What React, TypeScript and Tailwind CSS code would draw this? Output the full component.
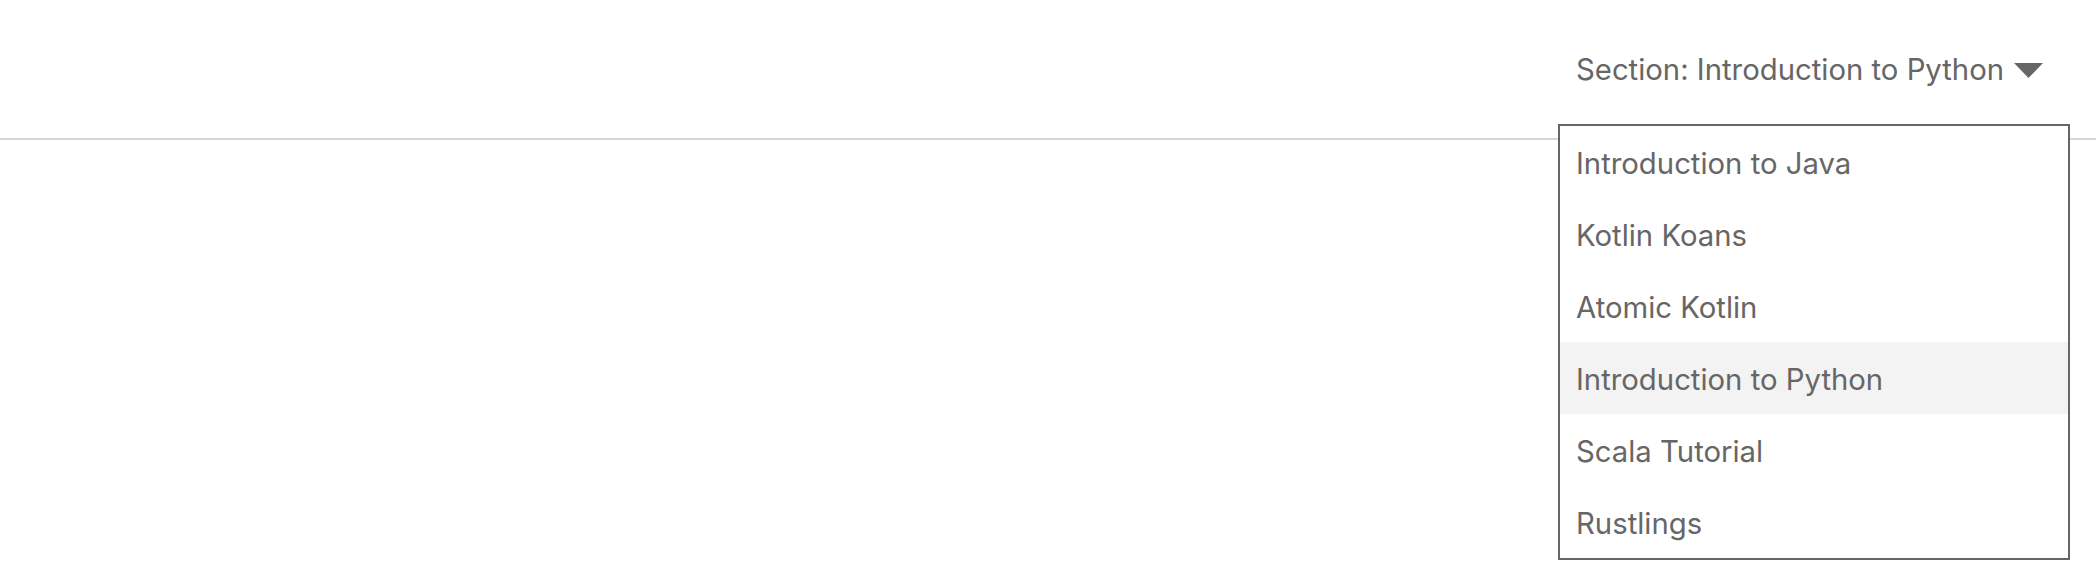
import React, { useState } from "react";

const sections = [
    "Introduction to Java",
    "Kotlin Koans",
    "Atomic Kotlin",
    "Introduction to Python",
    "Scala Tutorial",
    "Rustlings",
];

export default function App() {
    const [selected, setSelected] = useState("Introduction to Python");
    const [open, setOpen] = useState(true);

    return (
        <div
            className="w-full h-[588px] bg-white text-[#666666]"
            style={{ fontFamily: "Inter, 'Liberation Sans', sans-serif" }}
        >
            <div className="h-[140px] flex items-start justify-end border-b-2 border-[#d6d6d6]">
                <div className="relative w-[512px] mr-[26px]">
                    <button
                        onClick={() => setOpen(!open)}
                        className="h-[138px] pl-[18px] pt-[2px] flex items-center gap-[10px] text-[29.3px] leading-none"
                    >
                        <span>Section: {selected}</span>
                        <svg width="29" height="15" viewBox="0 0 29 15" className="mt-[1px]">
                            <path d="M0 0 H29 L14.5 15 Z" fill="#666666" />
                        </svg>
                    </button>

                    {open && (
                        <ul className="absolute left-0 top-[124px] w-full border-2 border-[#666666] bg-white z-10">
                            {sections.map((s) => (
                                <li
                                    key={s}
                                    onClick={() => setSelected(s)}
                                    className={`h-[72px] flex items-center pl-[16px] pt-[3px] text-[29.3px] leading-none cursor-pointer ${
                                        s === selected ? "bg-[#f3f3f3]" : "bg-white"
                                    }`}
                                >
                                    {s}
                                </li>
                            ))}
                        </ul>
                    )}
                </div>
            </div>
        </div>
    );
}
